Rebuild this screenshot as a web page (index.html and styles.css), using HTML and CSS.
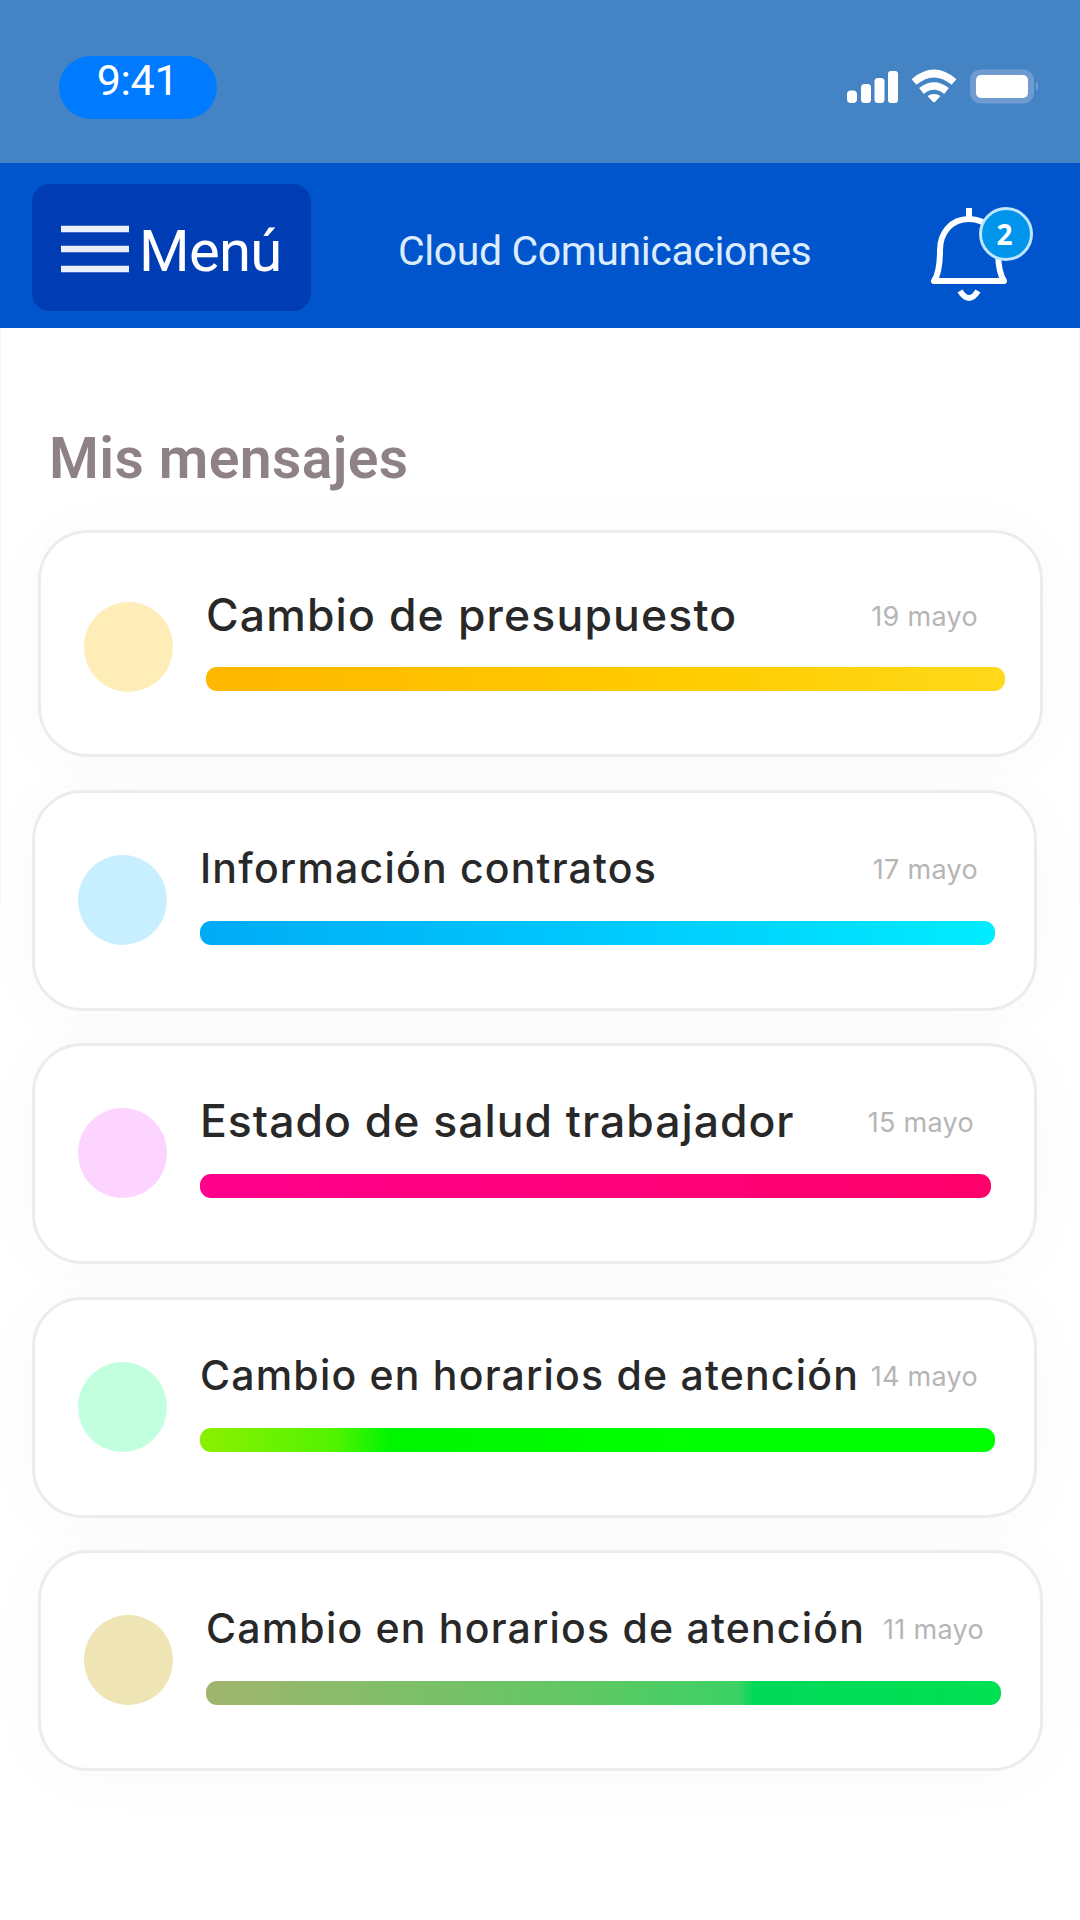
FILE: index.html
```html
<!DOCTYPE html>
<html lang="es">
<head>
    <meta charset="UTF-8">
    <title>Cloud Comunicaciones</title>
    <link rel="stylesheet" href="styles.css">
</head>
<body>
    <div class="status-bar">
        <div class="time">9:41</div>
        <svg class="status-icons" width="196" height="40" viewBox="0 0 196 40" fill="#fff">
            <rect x="2" y="22.500" width="10" height="12.500" rx="4"/>
            <rect x="16" y="16" width="10" height="19" rx="3.500"/>
            <rect x="29.500" y="10" width="10" height="25" rx="3.500"/>
            <rect x="43" y="3" width="10" height="32" rx="3"/>
            <g fill="none" stroke="#fff" stroke-width="7.500">
                <path d="M69 14 Q89 -3 109 14"/>
                <path d="M76.500 23 Q89 13 101.500 23"/>
            </g>
            <path d="M82.500 28 Q89 24 95.500 28 L90.500 33.500 Q89 35 87.500 33.500 Z"/>
            <rect x="126.500" y="3" width="61" height="31" rx="9" fill="#6f9bd1" stroke="#6f9bd1" stroke-width="3"/>
            <rect x="131" y="7" width="52" height="23" rx="5"/>
            <path d="M191 13 Q195 18 191 23 Z" fill="#79a2d6"/>
        </svg>
    </div>
    <header class="header">
        <button class="menu">
            <svg width="68" height="50" viewBox="0 0 68 50" stroke="#eaf0fb" stroke-width="6.500">
                <path d="M0 5 H68 M0 25 H68 M0 45 H68"/>
            </svg>
            <span>Menú</span>
        </button>
        <div class="title">Cloud Comunicaciones</div>
        <div class="bell">
            <svg width="104" height="100" viewBox="0 0 104 100" fill="none" stroke="#fff" stroke-width="6" stroke-linejoin="round">
                <path d="M40 3 V13"/>
                <path d="M40 14 C22 14 11 28 11 45 C11 57 10 69 5 76 H75 C71 70 69 60 69 45 C69 28 58 14 40 14 Z"/>
                <path d="M31 86 Q40 100 49 86"/>
            </svg>
            <span class="badge">2</span>
        </div>
    </header>
    <main class="content">
        <h1>Mis mensajes</h1>
        <div class="card shifted first">
            <div class="dot yellow"></div>
            <div class="info wide">
                <div class="row">
                    <div class="subject large presupuesto">Cambio de presupuesto</div>
                    <div class="date">19 mayo</div>
                </div>
                <div class="bar bar-yellow"></div>
            </div>
        </div>
        <div class="card">
            <div class="dot blue"></div>
            <div class="info">
                <div class="row">
                    <div class="subject">Información contratos</div>
                    <div class="date">17 mayo</div>
                </div>
                <div class="bar bar-blue"></div>
            </div>
        </div>
        <div class="card">
            <div class="dot pink"></div>
            <div class="info narrow">
                <div class="row">
                    <div class="subject large">Estado de salud trabajador</div>
                    <div class="date">15 mayo</div>
                </div>
                <div class="bar bar-pink"></div>
            </div>
        </div>
        <div class="card">
            <div class="dot green"></div>
            <div class="info">
                <div class="row">
                    <div class="subject">Cambio en horarios de atención</div>
                    <div class="date">14 mayo</div>
                </div>
                <div class="bar bar-green"></div>
            </div>
        </div>
        <div class="card shifted">
            <div class="dot sand"></div>
            <div class="info">
                <div class="row">
                    <div class="subject">Cambio en horarios de atención</div>
                    <div class="date">11 mayo</div>
                </div>
                <div class="bar bar-mixed"></div>
            </div>
        </div>
    </main>
</body>
</html>
```
FILE: styles.css
```css
* {
    box-sizing: border-box;
}
body {
    margin: 0;
    width: 1080px;
    height: 1920px;
    overflow: hidden;
    background-color: #fff;
    font-family: Roboto, sans-serif;
}
.status-bar {
    display: flex;
    justify-content: space-between;
    align-items: center;
    height: 163px;
    padding: 11px 39px 0 59px;
    background-color: #4484c4;
}
.status-icons {
    margin-top: 2px;
}
.time {
    width: 158px;
    height: 63px;
    padding-right: 1px;
    border-radius: 32px;
    background-color: #007bff;
    color: #fff;
    font-size: 43px;
    line-height: 49px;
    letter-spacing: -0.3px;
    text-align: center;
}
.header {
    display: flex;
    align-items: center;
    height: 165px;
    padding: 4px 47px 0 32px;
    background-color: #0055cc;
    color: #fff;
}
.menu {
    display: flex;
    align-items: center;
    gap: 10px;
    width: 279px;
    height: 127px;
    padding: 2px 0 0 29px;
    border: none;
    border-radius: 18px;
    background-color: #003cb3;
    color: #fff;
    font-family: inherit;
    font-size: 58px;
    letter-spacing: -0.7px;
}
.menu span {
    padding-top: 4px;
}
.title {
    margin-left: 87px;
    padding-top: 7px;
    color: #dcecff;
    font-size: 41px;
    letter-spacing: -0.4px;
}
.bell {
    position: relative;
    width: 104px;
    height: 100px;
    margin-top: 14px;
    margin-left: auto;
}
.badge {
    position: absolute;
    top: 2px;
    left: 50px;
    width: 54px;
    height: 54px;
    border: 3px solid #bfe6ff;
    border-radius: 50%;
    background-color: #0095eb;
    font-family: "Open Sans", sans-serif;
    font-size: 28px;
    font-weight: bold;
    line-height: 48px;
    text-indent: -3px;
    text-align: center;
}
.content {
    height: 1592px;
    padding: 97px 42px 0 32px;
    /* thin frame lines on both sides */
    background: linear-gradient(#f7f7f7, #f7f7f7) left top / 1px 576px no-repeat,
        linear-gradient(#f7f7f7, #f7f7f7) right top / 1px 576px no-repeat;
}
h1 {
    height: 105px;
    margin: 0 0 0 17px;
    color: #8f8285;
    font-size: 57px;
    font-weight: 600;
    line-height: 68px;
    letter-spacing: 0.4px;
}
.card {
    display: flex;
    align-items: flex-start;
    gap: 32px;
    width: 1005px;
    height: 221px;
    margin-bottom: 32.5px;
    padding: 62px 0 0 43px;
    border: 3px solid #ececec;
    border-radius: 50px;
    background-color: #fff;
    box-shadow: 0 4px 70px rgba(0, 0, 0, 0.028);
}
.shifted {
    margin-left: 6px;
}
.first {
    height: 227px;
    padding-top: 69px;
}
.dot {
    width: 89px;
    height: 90px;
    margin-right: 1px;
    border-radius: 50%;
}
.yellow { background-color: #ffedb8; }
.blue { background-color: #c8efff; }
.pink { background-color: #fdd3ff; }
.green { background-color: #c2ffdf; }
.sand { background-color: #efe4b3; }
.info {
    width: 795px;
}
.wide {
    width: 799px;
}
.narrow {
    width: 791px;
}
.row {
    display: flex;
    justify-content: space-between;
    align-items: flex-start;
    height: 66px;
    padding-right: 17px;
    white-space: nowrap;
}
.wide .row {
    height: 65px;
    padding-right: 27px;
}
.subject {
    color: #282828;
    font-family: Inter, sans-serif;
    font-size: 41px;
    font-weight: 500;
    line-height: 26px;
    letter-spacing: 1.2px;
}
.large {
    font-size: 44.5px;
    letter-spacing: 1px;
}
.presupuesto {
    letter-spacing: 1.15px;
}
.date {
    color: #b5b5b5;
    font-family: Inter, sans-serif;
    font-size: 27px;
    line-height: 29px;
    letter-spacing: 0.3px;
}
.bar {
    height: 24px;
    border-radius: 11px;
}
.bar-yellow { background: linear-gradient(90deg, #ffb700, #ffcc00 60%, #ffd91a); }
.bar-blue { background: linear-gradient(90deg, #00abf5, #00c8fd 50%, #00ecff); }
.bar-pink { background: linear-gradient(90deg, #ff008c, #ff006a); }
.bar-green { background: linear-gradient(90deg, #8cf000, #50f400 17%, #00f500 24%, #00ff00 60%); }
.bar-mixed { background: linear-gradient(90deg, #a0b46e, #5fc865 48%, #3bd264 67%, #00d95a 69%, #00e152); }
```
